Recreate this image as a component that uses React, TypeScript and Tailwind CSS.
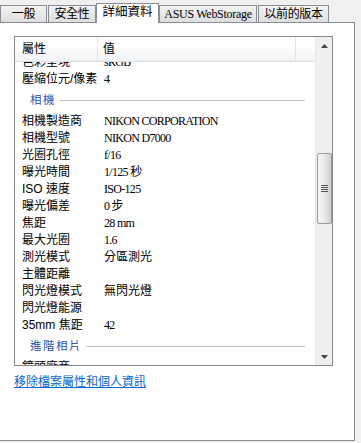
import React from "react";

const tabs = [
  { label: "一般", w: "w-[47px]", ml: "ml-0" },
  { label: "安全性", w: "w-[48px]", ml: "ml-[1px]" },
  { label: "詳細資料", w: "w-[63px]", ml: "ml-0", active: true },
  { label: "ASUS WebStorage", w: "w-[98px]", ml: "ml-0" },
  { label: "以前的版本", w: "w-[71px]", ml: "ml-[1px]" },
];

type Row = { k: string; v?: string } | { group: string };

const rows: Row[] = [
  { k: "色彩呈現", v: "sRGB" },
  { k: "壓縮位元/像素", v: "4" },
  { group: "相機" },
  { k: "相機製造商", v: "NIKON CORPORATION" },
  { k: "相機型號", v: "NIKON D7000" },
  { k: "光圈孔徑", v: "f/16" },
  { k: "曝光時間", v: "1/125 秒" },
  { k: "ISO 速度", v: "ISO-125" },
  { k: "曝光偏差", v: "0 步" },
  { k: "焦距", v: "28 mm" },
  { k: "最大光圈", v: "1.6" },
  { k: "測光模式", v: "分區測光" },
  { k: "主體距離" },
  { k: "閃光燈模式", v: "無閃光燈" },
  { k: "閃光燈能源" },
  { k: "35mm 焦距", v: "42" },
  { group: "進階相片" },
  { k: "鏡頭廠商" },
];

// latin runs in the value column are drawn narrower, like the bitmap font
const Val = ({ v }: { v: string }) => (
  <>
    {v.split(/([\x20-\x7e]+)/).map((p, i) =>
      /^[\x20-\x7e]+$/.test(p) ? (
        <span key={i} className="font-['Liberation_Serif',serif] text-[12px] tracking-[-0.7px] whitespace-pre">
          {p}
        </span>
      ) : (
        <span key={i}>{p}</span>
      )
    )}
  </>
);

const ScrollBar = () => (
  <div className="w-[17px] shrink-0 bg-[#efefef] border-l border-[#e6e6e6] flex flex-col items-center">
    {/* up arrow */}
    <div className="h-[17px] w-full flex items-center justify-center">
      <svg width="7" height="4" viewBox="0 0 7 4">
        <path d="M3.5 0 L7 4 L0 4 Z" fill="#444" />
      </svg>
    </div>
    <div className="h-[99px]" />
    {/* thumb */}
    <div className="w-[15px] h-[71px] rounded-[2px] border border-[#9a9a9a] bg-gradient-to-r from-[#f6f6f6] via-[#e9e9e9] to-[#cfcfcf] flex flex-col items-center justify-center gap-[1px]">
      <div className="w-[7px] h-px bg-[#555]" />
      <div className="w-[7px] h-px bg-[#555]" />
      <div className="w-[7px] h-px bg-[#555]" />
      <div className="w-[7px] h-px bg-[#555]" />
    </div>
    <div className="flex-1" />
    {/* down arrow */}
    <div className="h-[17px] w-full flex items-center justify-center">
      <svg width="7" height="4" viewBox="0 0 7 4">
        <path d="M0 0 L7 0 L3.5 4 Z" fill="#444" />
      </svg>
    </div>
  </div>
);

const App = () => {
  return (
    <div className="w-[361px] h-[443px] bg-[#f0f0f0] overflow-hidden text-black font-['Liberation_Sans','Noto_Sans_CJK_TC',sans-serif] text-[12px]">
      {/* TABS */}
      <div className="flex items-end h-[22px]">
        {tabs.map((t) =>
          t.active ? (
            <div
              key={t.label}
              className={`${t.w} ${t.ml} relative z-10 h-[20px] -mb-px bg-white border border-b-0 border-[#898c95] flex items-center justify-center font-['Liberation_Serif','Noto_Sans_CJK_TC',serif] text-[12.5px] pb-[2px]`}
            >
              {t.label}
            </div>
          ) : (
            <div
              key={t.label}
              className={`${t.w} ${t.ml} h-[17px] border border-b-0 border-[#898c95] bg-gradient-to-b from-[#f3f3f3] to-[#dedede] flex items-center justify-center font-['Liberation_Serif','Noto_Sans_CJK_TC',serif] text-[12px] tracking-[-0.3px]`}
            >
              {t.label}
            </div>
          )
        )}
      </div>

      {/* PANEL */}
      <div className="w-[355px] h-[419px] bg-white border border-l-0 border-[#898c95] flex flex-col">
        {/* LIST VIEW */}
        <div className="ml-[14px] mt-[13px] w-[319px] h-[330px] border border-[#828790] flex">
          <div className="flex-1 flex flex-col overflow-hidden">
            {/* header */}
            <div className="h-[25px] shrink-0 flex bg-gradient-to-b from-white from-40% to-[#f1f2f4] border-b border-[#dcdde0] font-['Liberation_Serif','Noto_Sans_CJK_TC',serif]">
              <div className="w-[83px] pl-[7px] flex items-center border-r border-[#e3e4e6]">屬性</div>
              <div className="w-[198px] pl-[5px] flex items-center border-r border-[#e3e4e6]">值</div>
            </div>
            {/* rows */}
            <div className="flex-1 overflow-hidden">
              <div className="-mt-[8px]">
                {rows.map((r, i) =>
                  "group" in r ? (
                    <div key={i} className="h-[25px] flex items-center pl-[15px] pr-[10px] gap-[4px]">
                      <span className="text-[#2b4fae] text-[11.5px] tracking-[1.5px]">{r.group}</span>
                      <div className="flex-1 h-px bg-[#b9c4dc]" />
                    </div>
                  ) : (
                    <div key={i} className="h-[17px] flex items-center leading-[17px]">
                      <div className="w-[89px] pl-[7px] whitespace-nowrap">{r.k}</div>
                      <div className="whitespace-nowrap">{r.v && <Val v={r.v} />}</div>
                    </div>
                  )
                )}
              </div>
            </div>
          </div>
          <ScrollBar />
        </div>

        {/* LINK */}
        <a href="#" className="ml-[14px] mt-[9px] w-fit text-[#0066cc] underline leading-[14px]">
          移除檔案屬性和個人資訊
        </a>
      </div>
    </div>
  );
};

export default App;
